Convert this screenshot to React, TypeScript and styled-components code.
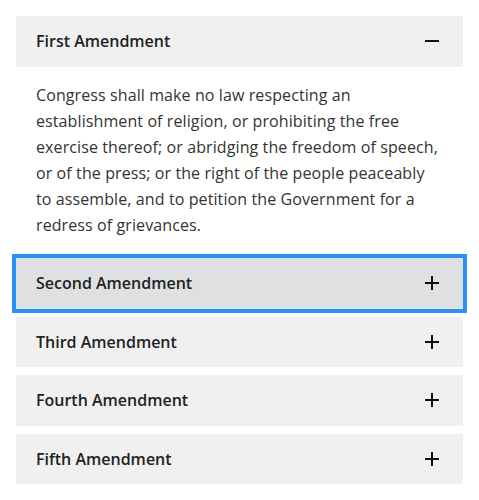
import { useState } from "react";
import styled, { createGlobalStyle } from "styled-components";

const GlobalStyle = createGlobalStyle`
    * {
        box-sizing: border-box;
    }
    body {
        margin: 0;
        background: #ffffff;
        font-family: "Open Sans", "Liberation Sans", sans-serif;
    }
`;

const AccordionList = styled.div`
    display: flex;
    flex-direction: column;
    gap: 8px;
    padding: 16px;
`;

const Item = styled.div`
    display: flex;
    flex-direction: column;
`;

const Trigger = styled.button<{ $focused?: boolean }>`
    display: flex;
    align-items: center;
    justify-content: space-between;
    width: 100%;
    height: 50.5px;
    padding: 0 24px 0 20px;
    border: none;
    background-color: ${(p) => (p.$focused ? "#dfe0e2" : "#f0f0f0")};
    outline: ${(p) => (p.$focused ? "4px solid #2a8ff7" : "none")};
    font-family: inherit;
    font-size: 16px;
    font-weight: 600;
    color: #222222;
    text-align: left;
    cursor: pointer;
`;

const Panel = styled.div`
    padding: 15px 20px 12.5px 20px;
    font-size: 16px;
    line-height: 26px;
    letter-spacing: 0.1px;
    color: #333333;
`;

const Icon = ({ open }: { open: boolean }) => (
    <svg width="14" height="14" viewBox="0 0 14 14" aria-hidden>
        <path d="M0 7H14" stroke="#111" strokeWidth="2" />
        {!open && <path d="M7 0V14" stroke="#111" strokeWidth="2" />}
    </svg>
);

const items = [
    {
        title: "First Amendment",
        text: "Congress shall make no law respecting an establishment of religion, or prohibiting the free exercise thereof; or abridging the freedom of speech, or of the press; or the right of the people peaceably to assemble, and to petition the Government for a redress of grievances.",
    },
    { title: "Second Amendment", text: "" },
    { title: "Third Amendment", text: "" },
    { title: "Fourth Amendment", text: "" },
    { title: "Fifth Amendment", text: "" },
];

function App() {
    const [open, setOpen] = useState(0);
    const focused = 1;
    return (
        <>
            <GlobalStyle />
            <AccordionList>
                {items.map((item, i) => (
                    <Item key={item.title}>
                        <Trigger
                            $focused={i === focused}
                            onClick={() => setOpen(open === i ? -1 : i)}
                        >
                            {item.title}
                            <Icon open={open === i} />
                        </Trigger>
                        {open === i && <Panel>{item.text}</Panel>}
                    </Item>
                ))}
            </AccordionList>
        </>
    );
}

export default App;
